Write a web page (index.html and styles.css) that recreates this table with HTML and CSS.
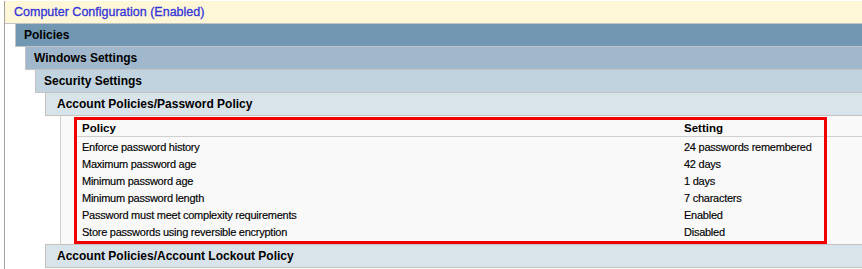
FILE: index.html
```html
<!DOCTYPE html>
<html lang="en">
<head>
<meta charset="utf-8">
<title>Computer Configuration</title>
<link rel="stylesheet" href="styles.css">
</head>
<body>
<div class="tree">
  <div class="hdr hdr-root">Computer Configuration (Enabled)</div>
  <div class="sec">
    <div class="hdr hdr-1">Policies</div>
    <div class="sec">
      <div class="hdr hdr-2">Windows Settings</div>
      <div class="sec">
        <div class="hdr hdr-3">Security Settings</div>
        <div class="sec">
          <div class="hdr hdr-4">Account Policies/Password Policy</div>
          <div class="body">
            <div class="grid">
              <div class="th">Policy</div>
              <div class="th">Setting</div>
              <div class="td">Enforce password history</div>
              <div class="td">24 passwords remembered</div>
              <div class="td">Maximum password age</div>
              <div class="td">42 days</div>
              <div class="td">Minimum password age</div>
              <div class="td">1 days</div>
              <div class="td">Minimum password length</div>
              <div class="td">7 characters</div>
              <div class="td">Password must meet complexity requirements</div>
              <div class="td">Enabled</div>
              <div class="td">Store passwords using reversible encryption</div>
              <div class="td">Disabled</div>
            </div>
            <div class="highlight"></div>
          </div>
        </div>
        <div class="sec">
          <div class="hdr hdr-4 hdr-top">Account Policies/Account Lockout Policy</div>
        </div>
      </div>
    </div>
  </div>
</div>
</body>
</html>
```
FILE: styles.css
```css
html, body {
  margin: 0;
  padding: 0;
  background: #ffffff;
}
body {
  font-family: "Liberation Sans", Arial, sans-serif;
  color: #000;
  overflow: hidden;
}
.tree {
  margin: 1px 0 0 4px;
  border-left: 1px solid #a3a3a3;
  height: 268px;
  display: flex;
  flex-direction: column;
}
.sec {
  margin-left: 10px;
  display: flex;
  flex-direction: column;
}
.hdr {
  height: 22px;
  border-bottom: 1px solid #c3c3c3;
  border-left: 1px solid #c3c3c3;
  display: flex;
  align-items: center;
  padding-left: 8px;
  font-size: 12px;
  font-weight: bold;
  white-space: nowrap;
}
.hdr-root {
  border-left: none;
  padding-left: 9px;
  background: #fdf6d7;
  color: #3434d6;
  font-weight: normal;
  font-size: 12.5px;
  -webkit-text-stroke: 0.3px #3434d6;
}
.hdr-1 { background: #7197b2; }
.hdr-2 { background: #a1b7cb; }
.hdr-3 { background: #c0d3df; }
.hdr-4 { background: #d9e3ea; padding-left: 11px; }
.hdr-top { border-top: 1px solid #c3c3c3; }

.body {
  position: relative;
  margin-left: 15px;
  border-left: 1px solid #d2d2d2;
  background: #f9f9f9;
  padding: 0 0 5px 16px;
}
.grid {
  display: grid;
  grid-template-columns: 602px 1fr;
}
.th {
  height: 21px;
  box-sizing: border-box;
  border-bottom: 1px solid #cfcfcf;
  display: flex;
  align-items: flex-end;
  padding: 0 0 1px 5px;
  font-size: 11.5px;
  font-weight: bold;
  line-height: 14px;
}
.td {
  height: 17px;
  line-height: 20px;
  padding-left: 5px;
  font-size: 11px;
  letter-spacing: -0.25px;
  white-space: nowrap;
  -webkit-text-stroke: 0.15px #000;
}
.highlight {
  position: absolute;
  left: 13px;
  top: 1px;
  width: 753px;
  height: 127px;
  box-sizing: border-box;
  border: 3px solid #f00000;
  pointer-events: none;
}
```
